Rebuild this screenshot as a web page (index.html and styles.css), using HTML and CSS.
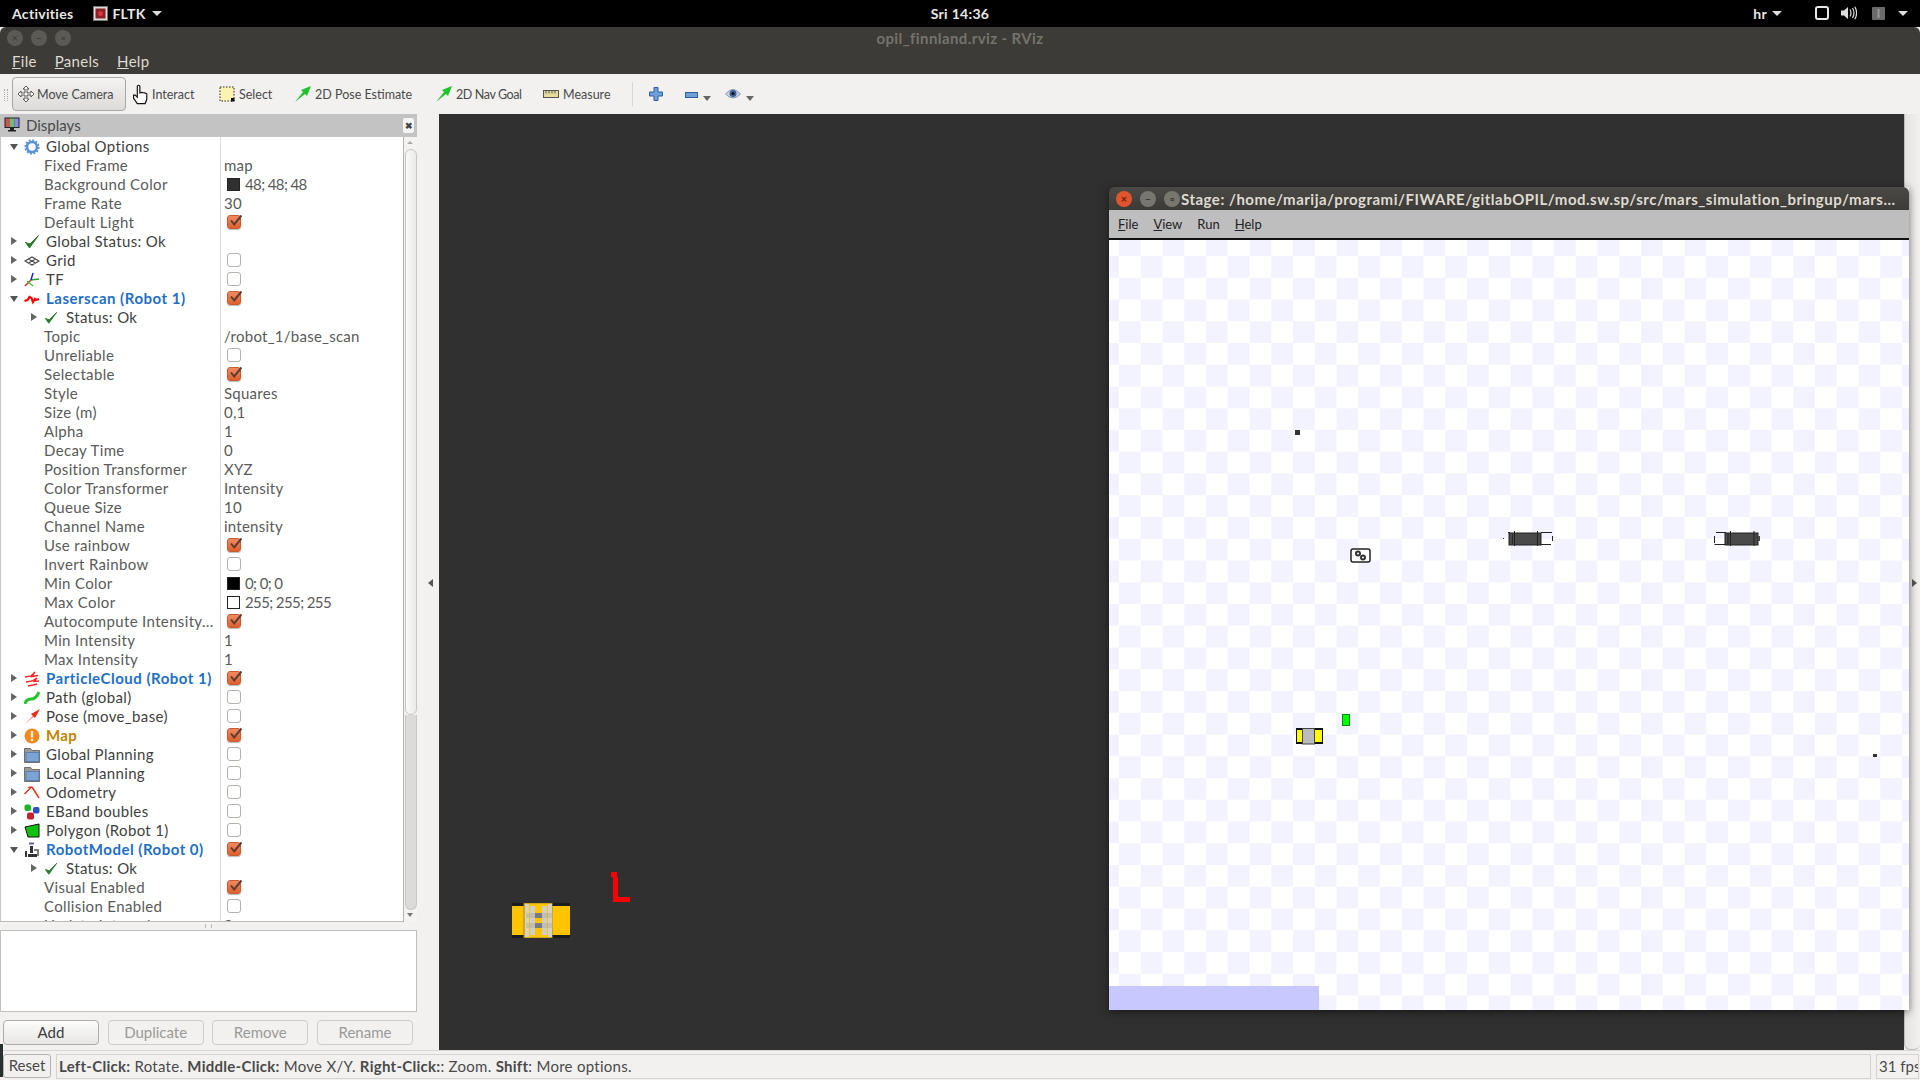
FILE: index.html
```html
<!DOCTYPE html>
<html lang="en">
<head>
  <meta charset="UTF-8">
  <title>opil_finnland.rviz - RViz</title>
  <link rel="stylesheet" href="styles.css">
</head>
<body>
  <!-- Shared icons -->
  <svg class="defs" width="0" height="0">
    <symbol id="i-check" viewBox="0 0 14 14"><path d="M3 6.500l3.200 4L13.500 1.500" fill="none" stroke="#5b3d30" stroke-width="2"/></symbol>
    <symbol id="i-ok" viewBox="0 0 16 16"><path d="M1.500 8.500l4 5.500L14.500 1.500 6 10z" fill="#2c7a2c" stroke="#2c7a2c" stroke-width="1"/></symbol>
    <symbol id="i-folder" viewBox="0 0 16 16"><path d="M0.500 1.500h6l1.500 2h7.500v12H0.500z" fill="#9a9a98" stroke="#6f6f6d"/><rect x="2" y="5.500" width="13" height="9" fill="#7ba3d3" stroke="#5b80ad"/></symbol>
    <symbol id="i-arrow" viewBox="0 0 16 16"><path d="M0 16L8 6 6 4l10-4-4 10-2-2z" fill="#1fc42a"/></symbol>
  </svg>

  <!-- GNOME top bar -->
  <header class="topbar">
    <span class="activities">Activities</span>
    <span class="app-menu">
      <svg width="15" height="15" viewBox="0 0 15 15"><rect x="0.500" y="0.500" width="14" height="14" fill="#ddd" stroke="#777"/><rect x="2.500" y="2.500" width="10" height="10" fill="#8c2222"/><circle cx="7.500" cy="7.500" r="2.500" fill="#d34"/></svg>
      FLTK <i class="caret"></i>
    </span>
    <span class="clock">Sri 14:36</span>
    <span class="tray">
      <span class="lang">hr <i class="caret"></i></span>
      <svg class="tray-screen" width="14" height="14" viewBox="0 0 14 14"><rect x="1" y="1" width="12" height="12" rx="2" fill="none" stroke="#e8e8e8" stroke-width="2"/></svg>
      <svg class="tray-sound" width="16" height="14" viewBox="0 0 16 14"><path d="M0 4.500h3L7 1v12L3 9.500H0z" fill="#ddd"/><path d="M9 3.500q2 3.500 0 7M11.500 2q3 5 0 10M13.800 0.800q3.600 6.200 0 12.400" fill="none" stroke="#ddd" stroke-width="1.200"/></svg>
      <svg class="tray-power" width="13" height="13" viewBox="0 0 13 13"><rect width="13" height="13" rx="1" fill="#6a6a6a"/><path d="M6.500 2v9" stroke="#999" stroke-width="2"/></svg>
      <i class="caret"></i>
    </span>
  </header>

  <div class="rviz">
    <div class="titlebar">
      <span class="win-btn">×</span>
      <span class="win-btn">–</span>
      <span class="win-btn">▫</span>
      <span class="win-title">opil_finnland.rviz - RViz</span>
    </div>
    <nav class="menubar">
      <span><u>F</u>ile</span>
      <span><u>P</u>anels</span>
      <span><u>H</u>elp</span>
    </nav>

    <div class="toolbar">
      <i class="grip"></i>
      <button class="tool active">
        <svg width="18" height="18" viewBox="0 0 18 18"><path d="M9 1l3 3h-2v4h4V6l3 3-3 3v-2h-4v4h2l-3 3-3-3h2v-4H4v2L1 9l3-3v2h4V4H6z" fill="#fff" stroke="#555"/></svg>
        Move Camera
      </button>
      <span class="tool t-interact">
        <svg width="17" height="22" viewBox="0 0 16 20"><path d="M5 2.500q1.200-1.500 2.400 0V9l1.500-.5 1.500.3 1.500.2 2 .8V15l-1.500 4H5l-3.500-5V11l1.500 0 2 2z" fill="#fff" stroke="#111" stroke-width="1.100"/></svg>
        Interact
      </span>
      <span class="tool t-select">
        <svg width="16" height="16" viewBox="0 0 16 16"><rect x="1" y="1" width="14" height="14" fill="#fdf3b0" stroke="#222" stroke-dasharray="1.500 1.500"/><rect x="12" y="12" width="3.500" height="3.500" fill="#111"/></svg>
        Select
      </span>
      <span class="tool t-pose"><svg width="16" height="16"><use href="#i-arrow"/></svg>2D Pose Estimate</span>
      <span class="tool t-nav"><svg width="16" height="16"><use href="#i-arrow"/></svg>2D Nav Goal</span>
      <span class="tool t-measure">
        <svg width="16" height="16" viewBox="0 0 16 16"><rect x="0.500" y="4.500" width="15" height="7" fill="#e8dc9a" stroke="#555"/><path d="M3 5v2.500M6 5v2.500M9 5v2.500M12 5v2.500" stroke="#555"/></svg>
        Measure
      </span>
      <i class="tool-sep"></i>
      <svg class="t-plus" width="14" height="14" viewBox="0 0 14 14"><path d="M5 0.500h4v4.500h4.500v4H9v4.500H5V9H0.500V5H5z" fill="#6f9fd8" stroke="#2f5f9f"/></svg>
      <svg class="t-minus" width="13" height="6" viewBox="0 0 13 6"><rect x="0.500" y="0.500" width="12" height="5" fill="#6f9fd8" stroke="#2f5f9f"/></svg>
      <i class="drop t-drop1"></i>
      <svg class="t-eye" width="16" height="14" viewBox="0 0 16 14"><path d="M0.500 7Q8-2 15.500 7 8 15 .5 7z" fill="#c8d4e4" stroke="#8a9ab0"/><circle cx="8" cy="6.500" r="3.500" fill="#3b5f96"/><circle cx="8" cy="6.500" r="1.500" fill="#111"/></svg>
      <i class="drop t-drop2"></i>
    </div>

    <div class="main">
      <aside class="left-dock">
        <div class="dock-title">
          <svg width="16" height="15" viewBox="0 0 16 15"><rect x="0.500" y="0.500" width="15" height="10.500" fill="#222"/><rect x="1.500" y="1.500" width="4.500" height="8.500" fill="#c05a50"/><rect x="6" y="1.500" width="4.500" height="8.500" fill="#6fbf73"/><rect x="10.500" y="1.500" width="4" height="8.500" fill="#8c8ce0"/><path d="M6 11h4v2h2v1.500H4V13h2z" fill="#222"/></svg>
          <span>Displays</span>
          <b class="dock-close">✖</b>
        </div>

        <div class="tree-wrap">
          <div class="tree">
            <div class="row"><div class="name top"><i class="tri down"></i>
              <svg class="ic" width="16" height="16" viewBox="0 0 16 16"><circle cx="8" cy="8" r="5" fill="none" stroke="#5a92d8" stroke-width="2.600"/><circle cx="8" cy="8" r="6.800" fill="none" stroke="#5a92d8" stroke-width="1.600" stroke-dasharray="2 1.560"/></svg>
              <span>Global Options</span></div><div class="val"></div></div>
            <div class="row"><div class="name prop">Fixed Frame</div><div class="val">map</div></div>
            <div class="row"><div class="name prop">Background Color</div><div class="val"><i class="swatch sw-bg"></i><span class="num">48; 48; 48</span></div></div>
            <div class="row"><div class="name prop">Frame Rate</div><div class="val">30</div></div>
            <div class="row"><div class="name prop">Default Light</div><div class="val"><i class="cb on"><svg width="14" height="14"><use href="#i-check"/></svg></i></div></div>
            <div class="row"><div class="name top"><i class="tri"></i><svg class="ic" width="16" height="16"><use href="#i-ok"/></svg><span>Global Status: Ok</span></div><div class="val"></div></div>
            <div class="row"><div class="name top"><i class="tri"></i>
              <svg class="ic" width="16" height="16" viewBox="0 0 16 16"><path d="M1 8l7-4 7 4-7 4zM4.500 6l7 4M11.500 6l-7 4" fill="none" stroke="#444" stroke-width="1.200"/></svg>
              <span>Grid</span></div><div class="val"><i class="cb"></i></div></div>
            <div class="row"><div class="name top"><i class="tri"></i>
              <svg class="ic" width="16" height="16" viewBox="0 0 16 16"><path d="M7 8L1 14" stroke="#e22" stroke-width="1.500"/><path d="M7 8l8-1" stroke="#2a2" stroke-width="1.500"/><path d="M7 8L9 1" stroke="#22c" stroke-width="1.500"/><path d="M3 9l6 5" stroke="#2c2" stroke-width="1.200"/></svg>
              <span>TF</span></div><div class="val"><i class="cb"></i></div></div>
            <div class="row"><div class="name top"><i class="tri down"></i>
              <svg class="ic" width="16" height="16" viewBox="0 0 16 16"><path d="M0.500 10l3-1 2-3 2 1 1.500 4 2-3 1 1 3-1" fill="none" stroke="#f00" stroke-width="2.200"/></svg>
              <span class="blue">Laserscan (Robot 1)</span></div><div class="val"><i class="cb on"><svg width="14" height="14"><use href="#i-check"/></svg></i></div></div>
            <div class="row"><div class="name child"><i class="tri"></i><svg class="ic" width="14" height="14" viewBox="0 0 16 16"><use href="#i-ok"/></svg><span>Status: Ok</span></div><div class="val"></div></div>
            <div class="row"><div class="name prop">Topic</div><div class="val">/robot_1/base_scan</div></div>
            <div class="row"><div class="name prop">Unreliable</div><div class="val"><i class="cb"></i></div></div>
            <div class="row"><div class="name prop">Selectable</div><div class="val"><i class="cb on"><svg width="14" height="14"><use href="#i-check"/></svg></i></div></div>
            <div class="row"><div class="name prop">Style</div><div class="val">Squares</div></div>
            <div class="row"><div class="name prop">Size (m)</div><div class="val">0,1</div></div>
            <div class="row"><div class="name prop">Alpha</div><div class="val">1</div></div>
            <div class="row"><div class="name prop">Decay Time</div><div class="val">0</div></div>
            <div class="row"><div class="name prop">Position Transformer</div><div class="val">XYZ</div></div>
            <div class="row"><div class="name prop">Color Transformer</div><div class="val">Intensity</div></div>
            <div class="row"><div class="name prop">Queue Size</div><div class="val">10</div></div>
            <div class="row"><div class="name prop">Channel Name</div><div class="val">intensity</div></div>
            <div class="row"><div class="name prop">Use rainbow</div><div class="val"><i class="cb on"><svg width="14" height="14"><use href="#i-check"/></svg></i></div></div>
            <div class="row"><div class="name prop">Invert Rainbow</div><div class="val"><i class="cb"></i></div></div>
            <div class="row"><div class="name prop">Min Color</div><div class="val"><i class="swatch sw-black"></i><span class="num">0; 0; 0</span></div></div>
            <div class="row"><div class="name prop">Max Color</div><div class="val"><i class="swatch sw-white"></i><span class="num">255; 255; 255</span></div></div>
            <div class="row"><div class="name prop">Autocompute Intensity…</div><div class="val"><i class="cb on"><svg width="14" height="14"><use href="#i-check"/></svg></i></div></div>
            <div class="row"><div class="name prop">Min Intensity</div><div class="val">1</div></div>
            <div class="row"><div class="name prop">Max Intensity</div><div class="val">1</div></div>
            <div class="row"><div class="name top"><i class="tri"></i>
              <svg class="ic" width="16" height="16" viewBox="0 0 16 16"><path d="M1 6l6-1 4-4-3 4.500 6-1M2 11l6-1 5-3-3 3.500 5-.5M4 15l5-1 4-1" fill="none" stroke="#f22" stroke-width="1.300"/></svg>
              <span class="blue">ParticleCloud (Robot 1)</span></div><div class="val"><i class="cb on"><svg width="14" height="14"><use href="#i-check"/></svg></i></div></div>
            <div class="row"><div class="name top"><i class="tri"></i>
              <svg class="ic" width="16" height="16" viewBox="0 0 16 16"><path d="M1 14q1-5 6-5t8-7" fill="none" stroke="#22c52a" stroke-width="3"/></svg>
              <span>Path (global)</span></div><div class="val"><i class="cb"></i></div></div>
            <div class="row"><div class="name top"><i class="tri"></i>
              <svg class="ic" width="16" height="16" viewBox="0 0 16 16"><path d="M0 16L9 7 7 5l9-5-5 9-1.500-1.500z" fill="#f02a12"/></svg>
              <span>Pose (move_base)</span></div><div class="val"><i class="cb"></i></div></div>
            <div class="row"><div class="name top"><i class="tri"></i>
              <svg class="ic" width="16" height="16" viewBox="0 0 16 16"><circle cx="8" cy="8" r="7.500" fill="#ee8a1e"/><path d="M8 3v6.500" stroke="#fdeeda" stroke-width="2.400"/><circle cx="8" cy="12" r="1.300" fill="#fdeeda"/></svg>
              <span class="warn">Map</span></div><div class="val"><i class="cb on"><svg width="14" height="14"><use href="#i-check"/></svg></i></div></div>
            <div class="row"><div class="name top"><i class="tri"></i><svg class="ic" width="16" height="16"><use href="#i-folder"/></svg><span>Global Planning</span></div><div class="val"><i class="cb"></i></div></div>
            <div class="row"><div class="name top"><i class="tri"></i><svg class="ic" width="16" height="16"><use href="#i-folder"/></svg><span>Local Planning</span></div><div class="val"><i class="cb"></i></div></div>
            <div class="row"><div class="name top"><i class="tri"></i>
              <svg class="ic" width="16" height="16" viewBox="0 0 16 16"><path d="M0.500 9L6 3.500 5 2.500l3-.5M8 2l7 11" fill="none" stroke="#e8341c" stroke-width="1.500"/></svg>
              <span>Odometry</span></div><div class="val"><i class="cb"></i></div></div>
            <div class="row"><div class="name top"><i class="tri"></i>
              <svg class="ic" width="16" height="16" viewBox="0 0 16 16"><rect x="0.500" y="0.500" width="6.500" height="6.500" rx="2" fill="#1fb52a"/><rect x="9" y="3" width="6.500" height="6.500" rx="2" fill="#2650c8"/><rect x="3" y="8.500" width="7" height="7" rx="2" fill="#c82028"/></svg>
              <span>EBand boubles</span></div><div class="val"><i class="cb"></i></div></div>
            <div class="row"><div class="name top"><i class="tri"></i>
              <svg class="ic" width="16" height="16" viewBox="0 0 16 16"><path d="M1 4l14-3v13H4z" fill="#10c010" stroke="#111"/><path d="M1 4h.1M15 1h.1M15 14h.1M4 14h.1" stroke="#f00" stroke-width="2"/></svg>
              <span>Polygon (Robot 1)</span></div><div class="val"><i class="cb"></i></div></div>
            <div class="row"><div class="name top"><i class="tri down"></i>
              <svg class="ic" width="16" height="16" viewBox="0 0 16 16"><rect x="5" y="0.500" width="5" height="2" fill="#668"/><path d="M6 4h3v7H6zM1 15V9h2v6zM4 15h9v-3H4z" fill="#333"/><path d="M10 8h4v6" fill="none" stroke="#555" stroke-width="1.500"/></svg>
              <span class="blue">RobotModel (Robot 0)</span></div><div class="val"><i class="cb on"><svg width="14" height="14"><use href="#i-check"/></svg></i></div></div>
            <div class="row"><div class="name child"><i class="tri"></i><svg class="ic" width="14" height="14" viewBox="0 0 16 16"><use href="#i-ok"/></svg><span>Status: Ok</span></div><div class="val"></div></div>
            <div class="row"><div class="name prop">Visual Enabled</div><div class="val"><i class="cb on"><svg width="14" height="14"><use href="#i-check"/></svg></i></div></div>
            <div class="row"><div class="name prop">Collision Enabled</div><div class="val"><i class="cb"></i></div></div>
            <div class="row"><div class="name prop">Update Interval</div><div class="val">0</div></div>
          </div>
          <div class="scrollbar">
            <i class="sb-up"></i>
            <div class="sb-thumb"></div>
            <div class="sb-track"></div>
            <i class="sb-down"></i>
          </div>
        </div>

        <div class="splitter"><i></i></div>
        <div class="text-panel"></div>
        <div class="dock-buttons">
          <button class="btn">Add</button>
          <button class="btn off">Duplicate</button>
          <button class="btn off">Remove</button>
          <button class="btn off">Rename</button>
        </div>
      </aside>

      <div class="handle"><i class="handle-left"></i></div>

      <section class="viewport">
        <svg class="robot3d" width="58" height="35" viewBox="0 0 58 35">
          <rect x="0" y="0" width="58" height="3" fill="#1c1c1c"/>
          <rect x="0" y="32" width="58" height="3" fill="#1c1c1c"/>
          <rect x="0" y="3" width="58" height="29" fill="#ffc400"/>
          <rect x="12" y="0" width="28" height="35" fill="#ffc400" stroke="#a08a30"/>
          <rect x="13" y="1" width="4" height="33" fill="#d4d2c8"/>
          <rect x="18" y="3" width="5" height="29" fill="#cfcdc4"/>
          <rect x="30" y="3" width="5" height="29" fill="#cfcdc4"/>
          <rect x="36" y="1" width="4" height="33" fill="#d4d2c8"/>
          <rect x="23" y="10" width="7" height="5" fill="#6d6d6d"/>
          <rect x="23" y="20" width="7" height="5" fill="#6d6d6d"/>
          <rect x="14" y="10" width="26" height="5" fill="#999" opacity="0.300"/>
          <rect x="14" y="20" width="26" height="5" fill="#999" opacity="0.300"/>
        </svg>
        <svg class="laser3d" width="20" height="30" viewBox="0 0 20 30"><path d="M0 0h6v5h1v20h12v5H2V5H0z" fill="#f00"/></svg>

        <!-- Stage simulator window floats over the viewport -->
        <div class="stage">
          <div class="stage-title">
            <span class="st-btn close">×</span>
            <span class="st-btn">–</span>
            <span class="st-btn">▫</span>
            <span class="st-text">Stage: /home/marija/programi/FIWARE/gitlabOPIL/mod.sw.sp/src/mars_simulation_bringup/mars...</span>
          </div>
          <div class="stage-menu">
            <span><u>F</u>ile</span>
            <span><u>V</u>iew</span>
            <span>Run</span>
            <span><u>H</u>elp</span>
          </div>
          <div class="stage-canvas">
            <i class="dot d1"></i>
            <i class="dot d2"></i>
            <svg class="obj charger" width="21" height="15" viewBox="0 0 21 15"><rect x="1" y="1" width="19" height="13" rx="2" fill="#fff" stroke="#222" stroke-width="1.500"/><circle cx="8" cy="5.500" r="2" fill="none" stroke="#333" stroke-width="2"/><circle cx="13" cy="9.500" r="2" fill="none" stroke="#333" stroke-width="2"/></svg>
            <svg class="obj robot-a" width="50" height="15" viewBox="0 0 50 15">
              <rect x="0" y="7" width="1" height="1" fill="#333"/>
              <rect x="6" y="2" width="32" height="12" fill="#4a4a4a" stroke="#222"/>
              <path d="M11.500 0v15M34.500 0v15M5 1.500h2" stroke="#222"/>
              <path d="M38 1.500h11M38 13.500h10M49.500 5v5" stroke="#222" fill="none"/>
              <rect x="9" y="2.500" width="1" height="11" fill="#2a2a2a"/>
            </svg>
            <svg class="obj robot-b" width="46" height="15" viewBox="0 0 46 15">
              <path d="M12 1.500H2M12 13.500H0.500M0.500 5v7" stroke="#222" fill="none"/>
              <rect x="11" y="2" width="33" height="12" fill="#4a4a4a" stroke="#222"/>
              <path d="M16.500 0v15M40 0v15M14 2v12" stroke="#222"/>
              <rect x="44" y="5" width="2" height="5" fill="#4a4a4a"/>
            </svg>
            <svg class="obj robot-y" width="28" height="17" viewBox="0 0 28 17">
              <rect x="0" y="0" width="27" height="16" fill="#111"/>
              <rect x="1" y="2" width="25" height="12" fill="#ff0"/>
              <rect x="6.500" y="0.500" width="12" height="15.500" fill="#bbb" stroke="#444"/>
            </svg>
            <i class="goal"></i>
            <i class="purple-bar"></i>
          </div>
        </div>
      </section>

      <div class="right-dock"><i class="handle-right"></i></div>
    </div>

    <footer class="statusbar">
      <button class="reset">Reset</button>
      <div class="status-text"><b>Left-Click:</b> Rotate. <b>Middle-Click:</b> Move X/Y. <b>Right-Click:</b>: Zoom. <b>Shift</b>: More options.</div>
      <div class="fps">31 fps</div>
    </footer>
    <i class="edge"></i>
  </div>
</body>
</html>
```
FILE: styles.css
```css
* {
  margin: 0;
  padding: 0;
  box-sizing: border-box;
}

body {
  width: 1920px;
  height: 1080px;
  overflow: hidden;
  background: #000;
  font-family: Lato, 'Open Sans', sans-serif;
  font-size: 15px;
  color: #3c3c3c;
}

i {
  font-style: normal;
  display: block;
}

.defs {
  position: absolute;
}

/* Top bar */
.topbar {
  height: 27px;
  background: #000;
  color: #e8e8e4;
  display: flex;
  align-items: center;
  position: relative;
  font-size: 14px;
  font-weight: 700;
  letter-spacing: 0.3px;
  padding-bottom: 1px;
}

.activities {
  margin-left: 12px;
}

.app-menu {
  display: flex;
  align-items: center;
  gap: 4px;
  margin-left: 20px;
}

.caret {
  display: inline-block;
  width: 0;
  height: 0;
  border-left: 5px solid transparent;
  border-right: 5px solid transparent;
  border-top: 5px solid #ddd;
  margin-left: 2px;
}

.clock {
  position: absolute;
  left: 0;
  right: 0;
  text-align: center;
}

.tray {
  margin-left: auto;
  display: flex;
  align-items: center;
  padding-right: 12px;
}

.lang {
  display: flex;
  align-items: center;
  gap: 3px;
  margin-right: 33px;
}

.tray-screen {
  margin-right: 12px;
}

.tray-sound {
  margin-right: 15px;
}

.tray-power {
  margin-right: 11px;
}

/* RViz window */
.rviz {
  position: relative;
  height: 1053px;
  background: #f2f1f0;
}

.titlebar {
  height: 22px;
  background: #3c3b37;
  border-radius: 6px 6px 0 0;
  display: flex;
  align-items: center;
  gap: 8px;
  padding-left: 7px;
  position: relative;
}

.win-btn {
  width: 16px;
  height: 16px;
  border-radius: 50%;
  background: #5b5a55;
  color: #3c3b37;
  font-size: 11px;
  line-height: 15px;
  text-align: center;
}

.win-title {
  position: absolute;
  left: 0;
  right: 0;
  text-align: center;
  color: #74736d;
  font-weight: 700;
  font-size: 15px;
  letter-spacing: 0.4px;
}

.menubar {
  height: 25px;
  background: #3c3b37;
  color: #dfdbd2;
  display: flex;
  padding: 3px 0 0 12px;
  gap: 18px;
  font-size: 15px;
  letter-spacing: 0.3px;
}

.toolbar {
  height: 40px;
  background: #f2f1f0;
  display: flex;
  align-items: center;
  position: relative;
  font-size: 12.5px;
}

.grip {
  position: absolute;
  left: 4px;
  top: 15px;
  width: 4px;
  height: 12px;
  border-left: 1px dotted #aaa;
  border-right: 1px dotted #aaa;
}

.tool {
  position: absolute;
  top: 3px;
  height: 34px;
  display: flex;
  align-items: center;
  gap: 4px;
  font-family: inherit;
  font-size: 12.5px;
  color: #4a4a4a;
  white-space: nowrap;
}

.tool.active {
  left: 12px;
  width: 114px;
  padding-left: 4px;
  gap: 2px;
  background: linear-gradient(#f4f3f2, #dcdbd9);
  border: 1px solid #a8a8a3;
  border-radius: 4px;
}

.t-interact {
  left: 132px;
  gap: 3px;
}

.t-select {
  left: 219px;
}

.t-pose {
  left: 295px;
}

.t-nav {
  left: 436px;
  letter-spacing: -0.4px;
}

.t-measure {
  left: 543px;
}

.tool-sep {
  position: absolute;
  left: 632px;
  top: 8px;
  width: 1px;
  height: 24px;
  background: #d8d7d5;
}

.t-plus {
  position: absolute;
  left: 649px;
  top: 13px;
}

.t-minus {
  position: absolute;
  left: 685px;
  top: 18px;
}

.t-eye {
  position: absolute;
  left: 725px;
  top: 13px;
}

.drop {
  position: absolute;
  top: 22px;
  width: 0;
  height: 0;
  border-left: 4px solid transparent;
  border-right: 4px solid transparent;
  border-top: 5px solid #666;
}

.t-drop1 {
  left: 703px;
}

.t-drop2 {
  left: 746px;
}

.main {
  height: 936px;
  display: flex;
}

/* Left dock */
.left-dock {
  width: 417px;
  display: flex;
  flex-direction: column;
}

.dock-title {
  height: 23px;
  background: #c3c3c3;
  display: flex;
  align-items: center;
  gap: 6px;
  padding: 0 0 2px 4px;
  position: relative;
  color: #4a4a4a;
  font-size: 15px;
}

.dock-close {
  position: absolute;
  right: 3px;
  top: 4px;
  width: 11px;
  height: 15px;
  background: #f4f4f4;
  border-radius: 2px;
  font-size: 9px;
  line-height: 15px;
  text-align: center;
  color: #444;
}

.tree-wrap {
  height: 785px;
  display: flex;
}

.tree {
  width: 404px;
  background: #fff;
  overflow: hidden;
  border-left: 1px solid #c8c8c6;
  border-right: 1px solid #b4b4b0;
  border-bottom: 1px solid #bbb;
}

.row {
  height: 19px;
  display: grid;
  grid-template-columns: 220px 1fr;
  line-height: 19px;
}

.name {
  display: flex;
  align-items: center;
  white-space: nowrap;
  border-right: 1px solid #ddd;
  color: #5a5a5a;
  position: relative;
  letter-spacing: 0.35px;
}

.name.prop {
  padding-left: 43px;
}

.name.top {
  padding-left: 23px;
  color: #3f3f3f;
}

.name.top span {
  margin-left: 6px;
}

.name.child {
  padding-left: 43px;
  color: #3f3f3f;
}

.name.child span {
  margin-left: 8px;
}

.blue {
  color: #1f6fc4;
  font-weight: 700;
  letter-spacing: 0.5px;
}

.warn {
  color: #c48400;
  font-weight: 700;
}

.tri {
  position: absolute;
  left: 10px;
  top: 5px;
  width: 0;
  height: 0;
  border-top: 4.5px solid transparent;
  border-bottom: 4.5px solid transparent;
  border-left: 6px solid #666;
}

.tri.down {
  left: 9px;
  top: 7px;
  border-left: 4.5px solid transparent;
  border-right: 4.5px solid transparent;
  border-top: 6px solid #555;
  border-bottom: 0;
}

.child .tri {
  left: 30px;
}

.val {
  display: flex;
  align-items: center;
  padding-left: 3px;
  color: #5a5a5a;
  white-space: nowrap;
  letter-spacing: 0.25px;
}

.num {
  letter-spacing: -0.6px;
}

.cb {
  width: 14px;
  height: 14px;
  margin: -1px 0 0 3px;
  background: #fff;
  border: 1px solid #b4b0aa;
  border-radius: 3px;
}

.cb svg {
  display: block;
  margin: -2px 0 0 0;
}

.cb.on {
  background: linear-gradient(#f08a60, #e06030);
  border-color: #c85a30;
  box-shadow: 0 1px 1px #bbb;
}

.swatch {
  width: 13px;
  height: 13px;
  margin: 0 5px 0 3px;
  border: 1px solid #222;
}

.sw-bg {
  background: #303030;
}

.sw-black {
  background: #000;
}

.sw-white {
  background: #fff;
}

.scrollbar {
  width: 13px;
  display: flex;
  flex-direction: column;
  background: #f2f1f0;
  position: relative;
}

.sb-up,
.sb-down {
  height: 12px;
  background: #f4f3f2;
  position: relative;
}

.sb-up::after,
.sb-down::after {
  content: "";
  position: absolute;
  left: 3px;
  width: 0;
  height: 0;
  border-left: 3.5px solid transparent;
  border-right: 3.5px solid transparent;
}

.sb-up::after {
  top: 4px;
  border-bottom: 3px solid #aaa;
}

.sb-down::after {
  top: 3px;
  border-top: 4px solid #777;
}

.sb-thumb {
  height: 566px;
  background: linear-gradient(90deg, #fafafa, #ebeae8);
  border: 1px solid #c8c7c4;
  border-radius: 6px;
  margin: 0 0 0 1px;
}

.sb-track {
  flex: 1;
  background: #dcdbd9;
  border: 1px solid #c8c7c4;
  border-top: 0;
  border-radius: 0 0 6px 6px;
  margin-left: 1px;
}

.splitter {
  height: 8px;
  display: flex;
  justify-content: center;
  padding: 2px 0 0 0;
}

.splitter i {
  width: 7px;
  height: 4px;
  border-left: 1px solid #bbb;
  border-right: 1px solid #bbb;
}

.text-panel {
  height: 82px;
  background: #fff;
  border: 1px solid #c0bfbb;
}

.dock-buttons {
  height: 38px;
  padding: 8px 4px 0 3px;
  display: flex;
  justify-content: space-between;
}

.btn {
  width: 96px;
  height: 25px;
  padding-bottom: 2px;
  background: linear-gradient(#fbfbfa, #e8e7e5);
  border: 1px solid #aeada8;
  border-radius: 4px;
  font-family: inherit;
  font-size: 15px;
  color: #3c3c3c;
}

.btn.off {
  background: #f2f1f0;
  border-color: #cfcdca;
  color: #9a9a98;
}

.handle {
  width: 22px;
  position: relative;
}

.handle-left {
  position: absolute;
  left: 11px;
  top: 465px;
  width: 0;
  height: 0;
  border-top: 4px solid transparent;
  border-bottom: 4px solid transparent;
  border-right: 5px solid #555;
}

/* 3D viewport */
.viewport {
  flex: 1;
  background: #303030;
  position: relative;
}

.robot3d {
  position: absolute;
  left: 73px;
  top: 789px;
}

.laser3d {
  position: absolute;
  left: 172px;
  top: 758px;
}

.right-dock {
  width: 16px;
  background: linear-gradient(90deg, #e4e3e1, #f2f1f0);
  border-left: 1px solid #bdbcb8;
  border-bottom: 1px solid #bdbcb8;
  border-radius: 0 0 6px 6px;
  position: relative;
}

.handle-right {
  position: absolute;
  left: 7px;
  top: 465px;
  width: 0;
  height: 0;
  border-top: 4px solid transparent;
  border-bottom: 4px solid transparent;
  border-left: 5px solid #555;
}

/* Stage window */
.stage {
  position: absolute;
  left: 670px;
  top: 73px;
  z-index: 5;
  width: 800px;
  height: 823px;
  box-shadow: 0 2px 8px rgba(0, 0, 0, 0.5);
  display: flex;
  flex-direction: column;
}

.stage-title {
  height: 23px;
  background: linear-gradient(#4a4945, #3c3b37);
  border-radius: 6px 6px 0 0;
  display: flex;
  align-items: center;
  gap: 8px;
  padding-left: 7px;
  color: #dfdbd2;
  font-weight: 700;
  font-size: 15px;
}

.st-btn {
  width: 16px;
  height: 16px;
  border-radius: 50%;
  background: #77766f;
  color: #3c3b37;
  font-size: 11px;
  line-height: 15px;
  text-align: center;
  flex: none;
}

.st-btn.close {
  background: #e0552d;
  color: #6a2010;
}

.st-text {
  margin-left: -7px;
  white-space: nowrap;
  letter-spacing: 0.5px;
}

.stage-menu {
  height: 30px;
  background: #bebebe;
  border-bottom: 2px solid #111;
  display: flex;
  gap: 15px;
  padding: 6px 0 0 9px;
  font-size: 13px;
  color: #222;
}

.stage-canvas {
  flex: 1;
  position: relative;
  background: conic-gradient(#f3f3ff 25%, #fff 0 50%, #f3f3ff 0 75%, #fff 0);
  background-size: 43.5px 43.5px;
  background-position: 31.75px 37.75px;
}

.obj {
  position: absolute;
}

.dot {
  position: absolute;
  background: #333;
}

.d1 {
  left: 186px;
  top: 190px;
  width: 5px;
  height: 5px;
}

.d2 {
  left: 764px;
  top: 514px;
  width: 4px;
  height: 3px;
}

.charger {
  left: 241px;
  top: 308px;
}

.robot-a {
  left: 394px;
  top: 291px;
}

.robot-b {
  left: 605px;
  top: 291px;
}

.robot-y {
  left: 187px;
  top: 488px;
}

.goal {
  position: absolute;
  left: 233px;
  top: 474px;
  width: 8px;
  height: 12px;
  background: #0f0;
  border: 1px solid #0a8a0a;
}

.purple-bar {
  position: absolute;
  left: 0;
  bottom: 0;
  width: 210px;
  height: 24px;
  background: #c8c8ff;
}

/* Status bar */
.statusbar {
  height: 30px;
  display: flex;
  align-items: center;
  gap: 5px;
  padding: 2px 1px 1px 3px;
  border-top: 1px solid #d8d7d5;
  font-size: 15px;
}

.reset {
  width: 48px;
  height: 24px;
  padding-bottom: 2px;
  background: #f2f1f0;
  border: 1px solid #b4b3ae;
  border-radius: 3px;
  font-family: inherit;
  font-size: 15px;
  color: #4a4a4a;
}

.status-text {
  flex: 1;
  height: 25px;
  line-height: 22px;
  padding-left: 2px;
  border: 1px solid #d4d3d0;
  color: #4a4a4a;
  letter-spacing: 0.27px;
}

.fps {
  width: 43px;
  height: 25px;
  line-height: 23px;
  padding-left: 2px;
  border: 1px solid #d4d3d0;
  white-space: nowrap;
  overflow: hidden;
  color: #4a4a4a;
}

.edge {
  position: absolute;
  left: 0;
  bottom: 3px;
  width: 3px;
  height: 33px;
  background: #2a2f2f;
}
```
